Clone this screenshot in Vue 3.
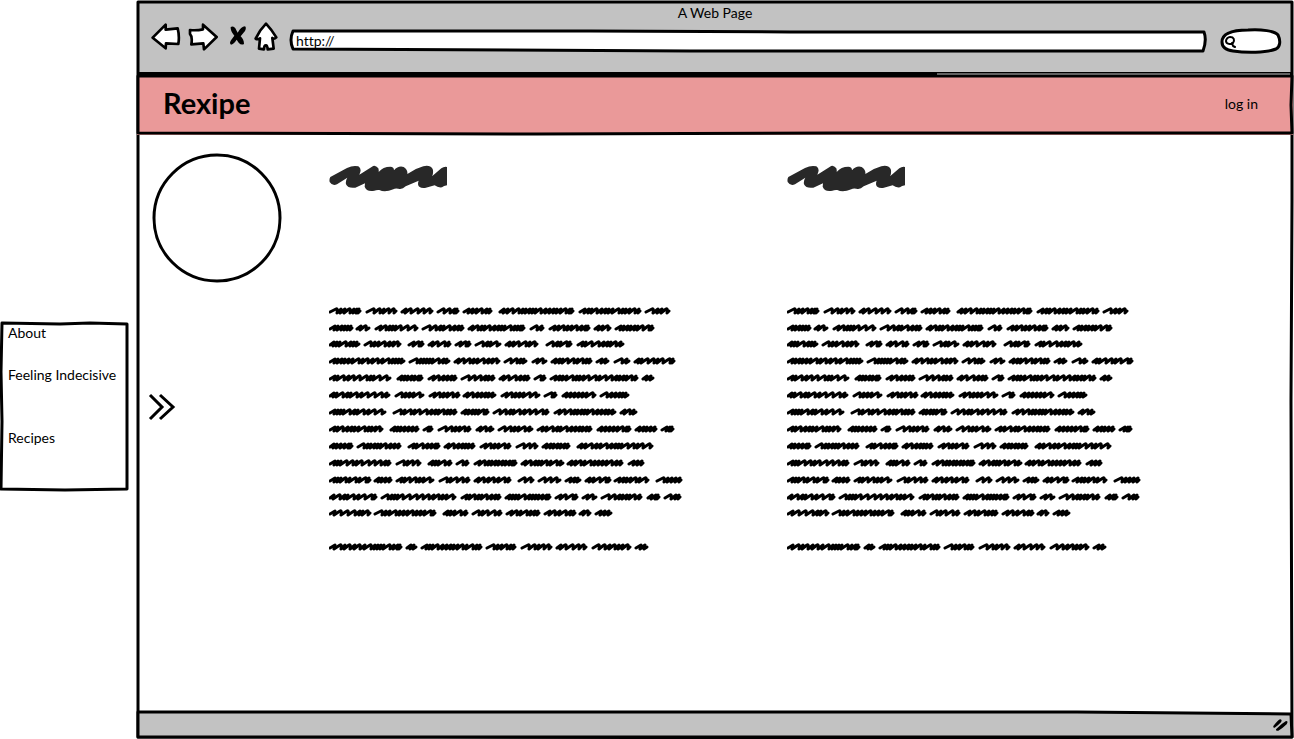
<script setup>
const links = [
  { label: 'About', gap: false },
  { label: 'Feeling Indecisive', gap: false },
  { label: 'Recipes', gap: true },
]

// Each line: vertical centre, then start/end pairs of its words.
const lines = [
  [5, [0, 32, 37, 68, 72, 104, 108, 130, 134, 163, 170, 245, 250, 312, 316, 341]],
  [22, [0, 24, 27, 41, 46, 89, 93, 135, 139, 196, 201, 215, 220, 261, 265, 282, 286, 325]],
  [38, [0, 31, 35, 72, 79, 95, 99, 122, 126, 142, 146, 172, 176, 209, 217, 243, 248, 295]],
  [55, [0, 76, 80, 121, 125, 171, 175, 198, 203, 218, 222, 263, 267, 280, 285, 301, 305, 346]],
  [72, [0, 62, 68, 94, 99, 128, 132, 166, 170, 201, 205, 217, 221, 309, 313, 325]],
  [89, [0, 61, 66, 95, 100, 131, 134, 167, 172, 211, 215, 228, 233, 267, 271, 300]],
  [106, [0, 57, 64, 128, 132, 160, 164, 220, 225, 287, 291, 308]],
  [123, [0, 54, 61, 90, 94, 104, 109, 142, 147, 165, 169, 204, 208, 263, 268, 302, 306, 328, 332, 345]],
  [140, [0, 24, 28, 72, 79, 111, 115, 146, 151, 182, 187, 209, 213, 241, 248, 324]],
  [157, [0, 62, 67, 92, 99, 123, 127, 140, 145, 188, 192, 235, 238, 294, 299, 315]],
  [174, [0, 42, 45, 63, 67, 105, 110, 141, 145, 182, 189, 205, 209, 232, 236, 252, 256, 282, 285, 320, 327, 353]],
  [191, [0, 48, 52, 127, 132, 172, 176, 222, 226, 249, 253, 268, 272, 313, 318, 331, 335, 352]],
  [207, [0, 42, 45, 107, 114, 139, 143, 173, 177, 211, 215, 247, 250, 262, 266, 283]],
  [241, [0, 73, 77, 88, 92, 153, 157, 187, 192, 223, 227, 258, 263, 302, 306, 319]],
]

function scribble(start, end, y, seed) {
  let x = start + 1
  let n = seed
  let d = `M${x} ${y + 1}`
  while (x < end - 4) {
    n = (n * 73 + 41) % 251
    const step = Math.min([4, 3, 4, 7, 3, 6][n % 6], end - 3 - x)
    if (step <= 0) break
    x += step
    d += step > 4
      ? `L${x - 1} ${y - 2}Q${x + 1} ${y - 3} ${x} ${y + 2}`
      : `L${x + 1} ${y - 2}L${x} ${y + 2}`
  }
  return d + `L${end - 1} ${y}`
}

const textPath = lines
  .map(([y, words], row) => {
    let d = ''
    for (let i = 0; i < words.length; i += 2) {
      d += scribble(words[i], words[i + 1], y, row * 17 + i * 5 + 3)
    }
    return d
  })
  .join('')
</script>

<template>
  <div class="canvas">
    <nav class="side" aria-label="Main">
      <svg class="outline" viewBox="0 0 128 170" preserveAspectRatio="none" aria-hidden="true">
        <path d="M2 1 L60 2 L90 1 L127 2 L127 60 L127 168 L65 169 L1 168 L2 100 L1 50 Z" />
      </svg>
      <a v-for="l in links" :key="l.label" href="#" :class="{ spaced: l.gap }">{{ l.label }}</a>
    </nav>

    <div class="window">
      <svg class="outline" viewBox="0 0 1156 738" preserveAspectRatio="none" aria-hidden="true">
        <path d="M1 1 L600 1 L1155 1 L1155 200 L1154 400 L1155 736 L700 737 L300 736 L1 736 L1 400 L1 130 Z" />
      </svg>

      <header class="toolbar">
        <div class="title">A Web Page</div>
        <div class="controls">
          <button type="button" aria-label="Back">
            <svg width="30" height="29" viewBox="63 66 90 87"><path class="icon" d="M68 113 L107 74 L107 89 L143 85 Q149 108 145 132 L108 130 L107 145 Z" /></svg>
          </button>
          <button type="button" aria-label="Forward">
            <svg width="30" height="29" viewBox="174 66 90 87"><path class="icon" d="M180 90 Q200 92 219 88 L219 74 L260 111 L222 148 L220 130 L184 133 Q188 110 180 102 Z" /></svg>
          </button>
          <button type="button" class="stop" aria-label="Stop">
            <svg width="18" height="29" viewBox="297 66 54 87"><path d="M302 81 Q313 76 319 91 L323 98 Q333 80 345 79 Q350 83 345 93 L332 109 Q342 119 342 132 Q334 137 326 128 L320 119 Q311 133 303 134 Q297 130 303 121 L313 107 Q301 94 302 81 Z" /></svg>
          </button>
          <button type="button" aria-label="Home">
            <svg width="24" height="29" viewBox="372 66 72 87"><path class="icon" d="M408 71 Q424 88 439 112 Q433 118 427 114 L431 146 L413 148 Q412 136 408 136 Q402 136 402 148 L387 146 L390 115 Q382 120 377 116 Q389 90 408 71 Z" /></svg>
          </button>
          <div class="url">
            <svg class="outline" viewBox="0 0 916 21" preserveAspectRatio="none" aria-hidden="true">
              <path class="white" d="M3 0 L300 0 L500 1 L914 1 Q917 9 913 20 L400 20 L3 18 Q-1 9 3 0 Z" />
            </svg>
            <input type="text" value="http://" aria-label="Address" />
          </div>
          <div class="search">
            <svg class="outline" viewBox="0 0 60 26" preserveAspectRatio="none" aria-hidden="true">
              <path class="white" d="M1 14 C1 5 11 2 27 2 C40 1 54 3 57 7 C60 13 59 19 55 21 C45 25 25 25 12 23 C5 22 1 19 1 14 Z" />
              <path class="glass" d="M9 9 C13 9 14 12 12 15 C10 17 5 16 5 13 C5 11 7 9 9 9 M11 15 L12 18 L14 19" />
            </svg>
            <input type="search" aria-label="Search" />
          </div>
        </div>
      </header>

      <div class="appbar">
        <svg class="outline" viewBox="0 0 1156 60" preserveAspectRatio="none" aria-hidden="true">
          <path d="M1 1 L1155 1 L1154 30 L1155 58 L700 58 L400 59 L1 58 Z" />
          <path class="gap" d="M800 -1 L1153 -1" />
        </svg>
        <h1>Rexipe</h1>
        <a href="#">log in</a>
      </div>

      <main>
        <div class="rail">
          <svg class="avatar" width="130" height="130" viewBox="0 0 130 130" role="img" aria-label="Profile picture">
            <circle cx="65" cy="65" r="63" />
          </svg>
          <button type="button" class="expand" aria-label="Expand menu">
            <svg width="28" height="28" viewBox="0 0 28 28"><path d="M2 2 L14 14 L2 26 M12 2 L25 14 L12 26" /></svg>
          </button>
        </div>

        <article v-for="n in 2" :key="n">
          <svg class="heading" width="118" height="27" viewBox="27 33 354 81" role="img" aria-label="Heading placeholder">
            <path d="M31 69 L81 42 Q99 33 115 37 Q127 45 118 62 L156 38 Q165 30 175 43 Q177 50 176 54 Q189 38 211 38 Q222 38 222 49 Q235 34 251 39 Q264 48 262 60 Q284 44 310 37 Q330 32 338 45 Q341 54 337 66 L364 43 Q372 37 381 39 L381 94 Q371 96 366 100 Q354 102 344 94 L315 102 Q296 104 294 91 Q294 84 296 80 L257 97 Q247 107 235 104 Q225 102 220 106 Q194 117 178 108 Q170 107 163 110 Q139 114 134 98 L135 88 L106 101 Q84 104 78 91 Q76 80 82 71 L51 91 Q37 97 29 84 Q27 76 31 69 Z" />
          </svg>
          <svg class="copy" width="356" height="246" viewBox="0 0 356 246" role="img" aria-label="Text placeholder">
            <path :d="textPath" />
          </svg>
        </article>
      </main>

      <footer>
        <svg class="outline" viewBox="0 0 1156 28" preserveAspectRatio="none" aria-hidden="true">
          <path class="grey" d="M1 1 L600 1 L940 1 L1154 3 L1155 26 L1 26 Z" />
        </svg>
        <svg class="grip" width="18" height="16" viewBox="0 0 54 48" aria-hidden="true">
          <path d="M7 27 Q20 10 27 7 Q35 8 30 16 Q21 26 11 32 Q5 33 7 27 Z M15 37 Q31 20 45 12 Q53 12 47 22 Q35 34 22 41 Q14 43 15 37 Z" />
        </svg>
      </footer>
    </div>
  </div>
</template>

<style>
body {
  margin: 0;
  background: #fff;
}
</style>

<style scoped>
.canvas {
  display: grid;
  grid-template-columns: 128px 1fr;
  column-gap: 9px;
  min-height: 100vh;
  box-sizing: border-box;
  padding: 1px 1px 0 0;
  color: #000;
  font-family: Lato, "Open Sans", sans-serif;
  font-size: 14px;
  font-variant-ligatures: none;
}
a {
  color: inherit;
  text-decoration: none;
}
button {
  border: 0;
  padding: 0;
  background: none;
  display: block;
}
svg {
  display: block;
}
.outline {
  position: absolute;
  inset: 0;
  width: 100%;
  height: 100%;
  overflow: visible;
  pointer-events: none;
}
.outline path {
  fill: none;
  stroke: #000;
  stroke-width: 3px;
  stroke-linejoin: round;
  vector-effect: non-scaling-stroke;
}
.outline .white {
  fill: #fff;
}
.outline .grey {
  fill: #c2c2c2;
}
.outline .glass {
  stroke-width: 2px;
  stroke-linecap: round;
}
.outline .gap {
  stroke: #c2c2c2;
  stroke-width: 1px;
}
.side {
  position: relative;
  align-self: start;
  display: flex;
  flex-direction: column;
  gap: 21px;
  margin-top: 321px;
  padding: 0 0 43px 8px;
  line-height: 21px;
}
.side a {
  white-space: nowrap;
}
.side .spaced {
  margin-top: 21px;
}
.window {
  position: relative;
  display: flex;
  flex-direction: column;
}
.toolbar {
  background: #c2c2c2;
  border-bottom: 3px solid #000;
  height: 68px;
  padding-top: 3px;
}
.title {
  text-align: center;
  line-height: 18px;
}
.controls {
  display: flex;
  align-items: flex-start;
  gap: 7px;
  padding: 0 12px 0 14px;
}
.stop {
  padding-left: 4px;
}
.icon {
  fill: #fff;
  stroke: #000;
  stroke-width: 8px;
  stroke-linejoin: round;
}
.url,
.search {
  position: relative;
  display: flex;
}
.url {
  flex: 1;
  height: 21px;
  margin: 9px 8px 0 5px;
}
.search {
  width: 60px;
  height: 26px;
  margin-top: 6px;
}
input {
  position: relative;
  width: 100%;
  min-width: 0;
  box-sizing: border-box;
  border: 0;
  outline: 0;
  padding: 0 6px 2px;
  background: none;
  font: inherit;
  color: inherit;
}
.search input {
  padding-left: 18px;
}
.appbar {
  position: relative;
  display: flex;
  align-items: center;
  justify-content: space-between;
  height: 56px;
  padding: 0 35px 4px 26px;
  background: #ea9999;
}
h1 {
  margin: 0;
  font-size: 29px;
  line-height: 32px;
  font-weight: 700;
}
main {
  flex: 1;
  display: grid;
  grid-template-columns: 177px 1fr 1fr;
  padding: 18px 48px 0 15px;
}
.rail {
  display: flex;
  flex-direction: column;
  gap: 110px;
  align-items: flex-start;
}
.avatar circle {
  fill: none;
  stroke: #000;
  stroke-width: 3px;
}
.expand {
  margin-left: -4px;
}
.expand path {
  fill: none;
  stroke: #000;
  stroke-width: 3px;
}
article {
  padding-top: 12px;
}
.heading {
  fill: #282828;
}
.copy {
  margin-top: 114px;
}
.copy path {
  fill: none;
  stroke: #000;
  stroke-width: 3px;
  stroke-linecap: round;
  stroke-linejoin: round;
}
footer {
  position: relative;
  display: flex;
  justify-content: flex-end;
  align-items: center;
  height: 28px;
  padding-right: 4px;
}
.grip {
  position: relative;
}
</style>
